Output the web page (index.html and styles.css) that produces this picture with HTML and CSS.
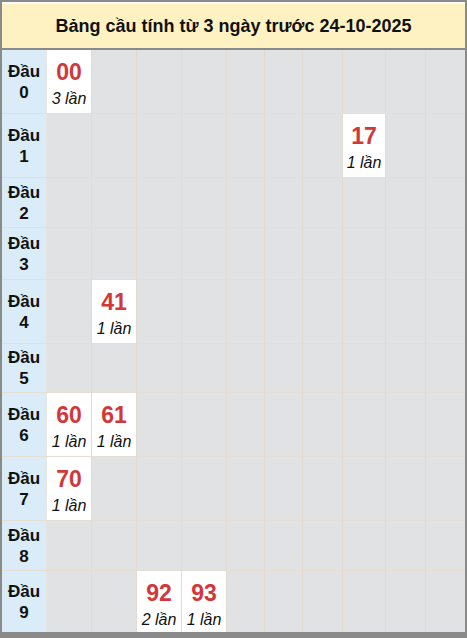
FILE: index.html
```html
<!DOCTYPE html>
<html lang="vi">
<head>
<meta charset="utf-8">
<title>Bảng cầu</title>
<link rel="stylesheet" href="styles.css">
</head>
<body>
<div class="frame">
  <div class="title">Bảng cầu tính từ 3 ngày trước 24-10-2025</div>
  <div class="grid">
    <div class="row r-tall"><div class="head">Đầu<br>0</div><div class="cell hit"><b>00</b><i>3 lần</i></div><div class="cell"></div><div class="cell"></div><div class="cell"></div><div class="cell"></div><div class="cell"></div><div class="cell"></div><div class="cell"></div><div class="cell"></div><div class="cell"></div></div>
    <div class="row r-tall"><div class="head">Đầu<br>1</div><div class="cell"></div><div class="cell"></div><div class="cell"></div><div class="cell"></div><div class="cell"></div><div class="cell"></div><div class="cell"></div><div class="cell hit"><b>17</b><i>1 lần</i></div><div class="cell"></div><div class="cell"></div></div>
    <div class="row r-short"><div class="head">Đầu<br>2</div><div class="cell"></div><div class="cell"></div><div class="cell"></div><div class="cell"></div><div class="cell"></div><div class="cell"></div><div class="cell"></div><div class="cell"></div><div class="cell"></div><div class="cell"></div></div>
    <div class="row r-short2"><div class="head">Đầu<br>3</div><div class="cell"></div><div class="cell"></div><div class="cell"></div><div class="cell"></div><div class="cell"></div><div class="cell"></div><div class="cell"></div><div class="cell"></div><div class="cell"></div><div class="cell"></div></div>
    <div class="row r-tall"><div class="head">Đầu<br>4</div><div class="cell"></div><div class="cell hit"><b>41</b><i>1 lần</i></div><div class="cell"></div><div class="cell"></div><div class="cell"></div><div class="cell"></div><div class="cell"></div><div class="cell"></div><div class="cell"></div><div class="cell"></div></div>
    <div class="row r-short3"><div class="head">Đầu<br>5</div><div class="cell"></div><div class="cell"></div><div class="cell"></div><div class="cell"></div><div class="cell"></div><div class="cell"></div><div class="cell"></div><div class="cell"></div><div class="cell"></div><div class="cell"></div></div>
    <div class="row r-tall"><div class="head">Đầu<br>6</div><div class="cell hit"><b>60</b><i>1 lần</i></div><div class="cell hit"><b>61</b><i>1 lần</i></div><div class="cell"></div><div class="cell"></div><div class="cell"></div><div class="cell"></div><div class="cell"></div><div class="cell"></div><div class="cell"></div><div class="cell"></div></div>
    <div class="row r-tall"><div class="head">Đầu<br>7</div><div class="cell hit"><b>70</b><i>1 lần</i></div><div class="cell"></div><div class="cell"></div><div class="cell"></div><div class="cell"></div><div class="cell"></div><div class="cell"></div><div class="cell"></div><div class="cell"></div><div class="cell"></div></div>
    <div class="row r-short"><div class="head">Đầu<br>8</div><div class="cell"></div><div class="cell"></div><div class="cell"></div><div class="cell"></div><div class="cell"></div><div class="cell"></div><div class="cell"></div><div class="cell"></div><div class="cell"></div><div class="cell"></div></div>
    <div class="row r-last"><div class="head">Đầu<br>9</div><div class="cell"></div><div class="cell"></div><div class="cell hit"><b>92</b><i>2 lần</i></div><div class="cell hit"><b>93</b><i>1 lần</i></div><div class="cell"></div><div class="cell"></div><div class="cell"></div><div class="cell"></div><div class="cell"></div><div class="cell"></div></div>
  </div>
</div>
</body>
</html>
```
FILE: styles.css
```css
html, body {
  margin: 0;
  padding: 0;
  background: #8a8a8a;
}
.frame {
  width: 467px;
  height: 638px;
  box-sizing: border-box;
  padding: 2px 2px 5px 2px;
  background: #8a8a8a;
  font-family: "Liberation Sans", Arial, sans-serif;
  display: flex;
  flex-direction: column;
}
.title {
  height: 46px;
  box-sizing: border-box;
  border-top: 2px solid #fbfbfb;
  background: #fff2c2;
  display: flex;
  align-items: center;
  justify-content: center;
  font-weight: bold;
  font-size: 18px;
  color: #111;
  margin-bottom: 2px;
}
.grid {
  display: flex;
  flex-direction: column;
  background: #e3dcd3;
}
.row {
  display: grid;
  grid-template-columns: 45px 45px 45px 45px 45px 38px 38px 40px 43px 40px 39px;
  border-bottom: 1px solid #e6ddd3;
  box-sizing: border-box;
}
.r-tall { height: 64px; }
.r-short { height: 50px; }
.r-short2 { height: 52px; }
.r-short3 { height: 49px; }
.r-last { height: 61px; border-bottom: none; }
.head {
  background: #d9ecf7;
  border-right: 1px solid #e8e4de;
  display: flex;
  flex-direction: column;
  align-items: center;
  justify-content: center;
  text-align: center;
  font-weight: bold;
  font-size: 17px;
  line-height: 21px;
  color: #111;
}
.cell {
  background: #e1e2e4;
  border-right: 1px solid #e3dbd1;
}
.cell:last-child { border-right: none; }
.hit {
  background: #fff;
  display: flex;
  flex-direction: column;
  align-items: center;
  justify-content: flex-start;
  padding-top: 8px;
}
.hit b {
  color: #d2373a;
  font-size: 23px;
  line-height: 28px;
  font-weight: bold;
}
.hit i {
  color: #111;
  font-size: 16px;
  line-height: 20px;
  font-style: italic;
  margin-top: 3px;
}
```
